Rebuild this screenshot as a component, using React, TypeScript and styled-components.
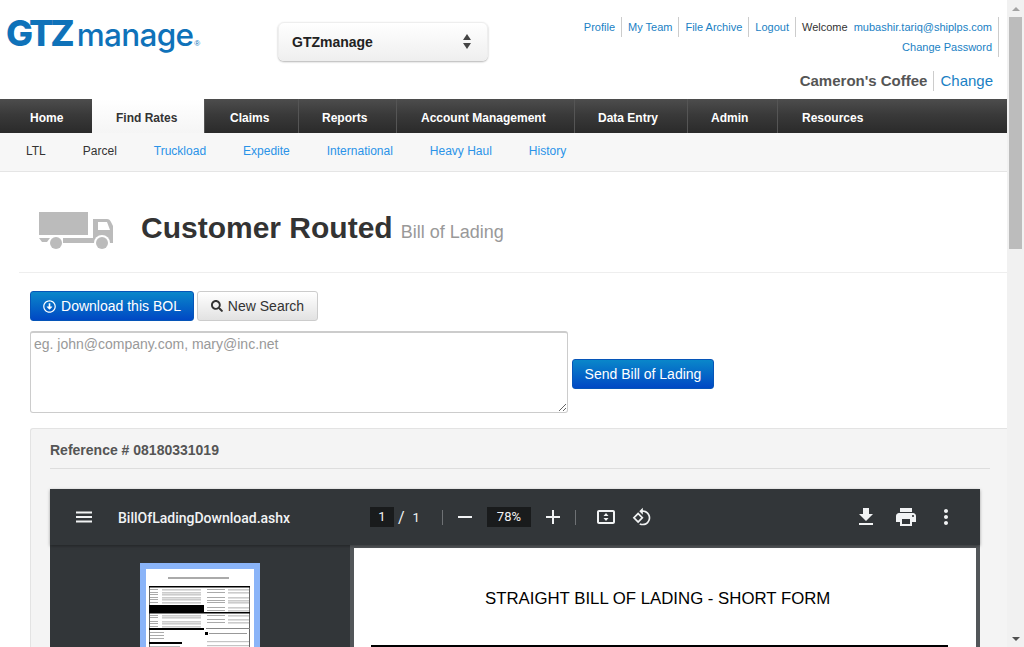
import * as React from "react"
import styled, { createGlobalStyle } from "styled-components"
import { FaRegArrowAltCircleDown, FaSearch } from "react-icons/fa"

const GlobalStyle = createGlobalStyle`
    html, body {
        margin: 0;
        height: 100%;
        overflow: hidden;
        background: #fff;
    }
    body, textarea, button {
        font-family: "Liberation Sans", Arial, sans-serif;
    }
    * {
        box-sizing: border-box;
    }
`

const navItems = [
    { label: "Home", width: 92, pad: 30, plain: true },
    { label: "Find Rates", width: 112, pad: 24, active: true, plain: true },
    { label: "Claims", width: 94, pad: 25 },
    { label: "Reports", width: 98, pad: 23 },
    { label: "Account Management", width: 178, pad: 24 },
    { label: "Data Entry", width: 113, pad: 23 },
    { label: "Admin", width: 90, pad: 23 },
    { label: "Resources", width: 110, pad: 24 },
]
const subItems = ["LTL", "Parcel", "Truckload", "Expedite", "International", "Heavy Haul", "History"]

const Logo = () => (
    <LogoBox>
        <LogoBold>GTZ</LogoBold>
        <LogoLight>manage</LogoLight>
        <LogoMark>®</LogoMark>
    </LogoBox>
)

const Truck = () => (
    <svg width="76" height="38" viewBox="0 0 76 38" fill="#bbb">
        <rect x="1" y="1" width="49" height="23" />
        <path d="M1 27h11l-3 4H4z" />
        <rect x="25" y="27" width="36" height="5" />
        <path
            d="M55 8h14c2 0 3 1 4 3l2 4 0 17h-4l-7-3-9 3z M60 11v8h12l-3-8z"
            fillRule="evenodd"
        />
        <circle cx="64" cy="32" r="8" fill="#fff" />
        <circle cx="18" cy="32" r="6" />
        <circle cx="64" cy="32" r="6" />
    </svg>
)

const Thumbnail = () => (
    <svg width="108" height="84" viewBox="0 0 108 84">
        <rect width="108" height="84" fill="#fff" />
        <rect x="22" y="8" width="61" height="2" fill="#aaa" />
        <rect x="3.5" y="17.5" width="100" height="66" fill="none" stroke="#666" strokeWidth="1" />
        <rect x="3" y="17" width="101" height="1.5" fill="#000" />
        <rect x="3" y="36" width="55" height="8" fill="#000" />
        <rect x="3" y="43" width="101" height="1.5" fill="#000" />
        <rect x="3" y="59" width="55" height="2" fill="#000" />
        <rect x="60" y="59" width="44" height="1" fill="#888" />
        <rect x="3" y="73" width="33" height="2" fill="#000" />
        {[20, 23, 25, 28, 30, 33, 46, 48, 52, 54, 57].map((y) => (
            <React.Fragment key={y}>
                <rect x="4" y={y} width="8" height="1" fill="#aaa" />
                <rect x="16" y={y} width="39" height="1.6" fill="#ccc" />
            </React.Fragment>
        ))}
        {[20, 23, 28, 31, 33, 38, 41, 46, 50, 53].map((y) => (
            <React.Fragment key={y}>
                <rect x="61" y={y} width="18" height="1" fill="#aaa" />
                <rect x="82" y={y} width="21" height="1.6" fill="#ccc" />
            </React.Fragment>
        ))}
        {[63, 66, 69].map((y) => (
            <rect key={y} x="4" y={y} width="14" height="1" fill="#aaa" />
        ))}
        {[77, 80].map((y) => (
            <rect key={y} x="4" y={y} width="30" height="1" fill="#bbb" />
        ))}
        <rect x="59" y="63" width="3" height="3" fill="#000" />
        <rect x="63" y="64" width="38" height="1" fill="#999" />
        {[72, 76, 80].map((y) => (
            <rect key={y} x="61" y={y} width="42" height="1.2" fill="#c4c4c4" />
        ))}
    </svg>
)

const Glyph = ({ d, size = 24 }: { d: string; size?: number }) => (
    <svg width={size} height={size} viewBox="0 0 24 24" fill="#f1f3f4">
        <path d={d} />
    </svg>
)

export default function App() {
    return (
        <Page>
            <GlobalStyle />
            <Main>
                <Header>
                    <Logo />
                    <SiteSelect>
                        <span>GTZmanage</span>
                        <Arrows>
                            <ArrowUp />
                            <ArrowDown />
                        </Arrows>
                    </SiteSelect>
                    <HeaderRight>
                        <TopLinks>
                            <TopRow>
                                <TopLink>Profile</TopLink>
                                <TopLink>My Team</TopLink>
                                <TopLink>File Archive</TopLink>
                                <TopLink>Logout</TopLink>
                                <TopCell>
                                    Welcome <Email>mubashir.tariq@shiplps.com</Email>
                                </TopCell>
                            </TopRow>
                            <TopRow>
                                <TopLink>Change Password</TopLink>
                            </TopRow>
                        </TopLinks>
                        <CompanyRow>
                            <Company>Cameron's Coffee</Company>
                            <ChangeLink>Change</ChangeLink>
                        </CompanyRow>
                    </HeaderRight>
                </Header>

                <Nav>
                    {navItems.map((item) => (
                        <NavItem
                            key={item.label}
                            $active={item.active}
                            $width={item.width}
                            $pad={item.pad}
                            $plain={item.plain}
                        >
                            {item.label}
                        </NavItem>
                    ))}
                </Nav>
                <SubNav>
                    {subItems.map((item, i) => (
                        <SubItem key={item} $plain={i < 2}>
                            {item}
                        </SubItem>
                    ))}
                </SubNav>

                <TitleRow>
                    <Truck />
                    <Title>Customer Routed</Title>
                    <TitleSmall>Bill of Lading</TitleSmall>
                </TitleRow>

                <Content>
                    <Buttons>
                        <PrimaryButton>
                            <FaRegArrowAltCircleDown size={13} />
                            Download this BOL
                        </PrimaryButton>
                        <DefaultButton>
                            <FaSearch size={12} />
                            New Search
                        </DefaultButton>
                    </Buttons>
                    <SendRow>
                        <EmailBox placeholder="eg. john@company.com, mary@inc.net" />
                        <SendButton>Send Bill of Lading</SendButton>
                    </SendRow>
                </Content>

                <Well>
                    <Reference>Reference # 08180331019</Reference>
                    <Viewer>
                        <ViewerBar>
                            <BarLeft>
                                <Glyph d="M4 17.5h16v-2H4v2zm0-4.5h16v-2H4v2zm0-6.5v2h16v-2H4z" />
                                <FileName>BillOfLadingDownload.ashx</FileName>
                            </BarLeft>
                            <BarCenter>
                                <PageBox>1</PageBox>
                                <Slash>/</Slash>
                                <PageTotal>1</PageTotal>
                                <BarDivider $left={22} />
                                <Glyph d="M5 11h14v2H5z" />
                                <ZoomBox>78%</ZoomBox>
                                <Glyph d="M19 13h-6v6h-2v-6H5v-2h6V5h2v6h6z" />
                                <BarDivider $left={10} />
                                <FitIcon>
                                    <Glyph d="M19 5H5c-1.1 0-2 .9-2 2v10c0 1.1.9 2 2 2h14c1.1 0 2-.9 2-2V7c0-1.1-.9-2-2-2zm0 12H5V7h14v10zM12 8l-2.5 3h5zM12 16l2.5-3h-5z" />
                                </FitIcon>
                                <Glyph
                                    size={20}
                                    d="M7.34 6.41.86 12.9l6.49 6.48 6.49-6.48-6.5-6.49zM3.69 12.9l3.66-3.66L11 12.9l-3.66 3.66-3.65-3.66zm15.67-6.26C17.61 4.88 15.3 4 13 4V.76L8.76 5 13 9.24V6c1.79 0 3.58.68 4.95 2.05 2.73 2.73 2.73 7.17 0 9.9C16.58 19.32 14.79 20 13 20c-.97 0-1.94-.21-2.84-.61l-1.49 1.49C10.02 21.62 11.51 22 13 22c2.3 0 4.61-.88 6.36-2.64 3.52-3.51 3.52-9.21 0-12.72z"
                                />
                            </BarCenter>
                            <BarRight>
                                <Glyph d="M19 9h-4V3H9v6H5l7 7 7-7zM5 18v2h14v-2H5z" />
                                <Glyph d="M19 8H5c-1.66 0-3 1.34-3 3v6h4v4h12v-4h4v-6c0-1.66-1.34-3-3-3zm-3 11H8v-5h8v5zm3-7c-.55 0-1-.45-1-1s.45-1 1-1 1 .45 1 1-.45 1-1 1zm-1-9H6v4h12V3z" />
                                <Glyph d="M12 8c1.1 0 2-.9 2-2s-.9-2-2-2-2 .9-2 2 .9 2 2 2zm0 2c-1.1 0-2 .9-2 2s.9 2 2 2 2-.9 2-2-.9-2-2-2zm0 6c-1.1 0-2 .9-2 2s.9 2 2 2 2-.9 2-2-.9-2-2-2z" />
                            </BarRight>
                        </ViewerBar>
                        <ViewerBody>
                            <SidePanel>
                                <ThumbFrame>
                                    <Thumbnail />
                                </ThumbFrame>
                            </SidePanel>
                            <DocArea>
                                <DocPage>
                                    <DocTitle>STRAIGHT BILL OF LADING - SHORT FORM</DocTitle>
                                    <DocRule />
                                </DocPage>
                            </DocArea>
                        </ViewerBody>
                    </Viewer>
                </Well>
            </Main>
            <ScrollTrack>
                <ScrollButton>
                    <ScrollUp />
                </ScrollButton>
                <ScrollThumb />
                <ScrollSpace />
                <ScrollButton>
                    <ScrollDown />
                </ScrollButton>
            </ScrollTrack>
        </Page>
    )
}

const Page = styled("div")`
    display: flex;
    width: 1024px;
    height: 647px;
    overflow: hidden;
`
const Main = styled("div")`
    width: 1007px;
    height: 647px;
    overflow: hidden;
    flex-shrink: 0;
`
const Header = styled("header")`
    height: 99px;
    display: flex;
    align-items: flex-start;
    padding-left: 6px;
`
const LogoBox = styled("div")`
    width: 272px;
    height: 60px;
    display: flex;
    align-items: baseline;
    color: #0f72b9;
    padding-top: 11px;
    flex-shrink: 0;
`
const LogoBold = styled("span")`
    font: 800 36px Inter, sans-serif;
    letter-spacing: -3px;
`
const LogoLight = styled("span")`
    font: 500 31.5px Inter, sans-serif;
    letter-spacing: -0.7px;
    margin-left: 5px;
`
const LogoMark = styled("span")`
    font: 400 8px "Liberation Sans", sans-serif;
    margin-left: 1px;
`
const SiteSelect = styled("div")`
    margin-top: 22px;
    width: 210px;
    height: 39px;
    border-radius: 6px;
    border: 1px solid #eee;
    background: linear-gradient(#fff, #efefef);
    box-shadow: 0 1px 2px rgba(0, 0, 0, 0.3);
    display: flex;
    align-items: center;
    justify-content: space-between;
    padding: 0 16px 0 13px;
    font-size: 14px;
    font-weight: 700;
    color: #222;
`
const Arrows = styled("div")`
    display: flex;
    flex-direction: column;
    gap: 3px;
`
const ArrowUp = styled("div")`
    border-left: 4.5px solid transparent;
    border-right: 4.5px solid transparent;
    border-bottom: 6px solid #444;
`
const ArrowDown = styled("div")`
    border-left: 4.5px solid transparent;
    border-right: 4.5px solid transparent;
    border-top: 6px solid #444;
`
const HeaderRight = styled("div")`
    margin-left: auto;
    display: flex;
    flex-direction: column;
    align-items: flex-end;
    padding: 17px 8px 0 0;
`
const TopLinks = styled("div")`
    display: flex;
    flex-direction: column;
    align-items: flex-end;
`
const TopRow = styled("div")`
    display: flex;
    height: 20px;
`
const TopCell = styled("div")`
    font-size: 11px;
    line-height: 20px;
    padding: 0 6px;
    border-right: 1px solid #ccc;
    color: #333;
    white-space: pre;
`
const TopLink = styled(TopCell)`
    color: #1a7fc4;
`
const Email = styled("span")`
    color: #1a7fc4;
    margin-left: 3px;
`
const CompanyRow = styled("div")`
    display: flex;
    align-items: center;
    height: 20px;
    margin-top: 14px;
    padding-right: 6px;
    font-size: 15px;
`
const Company = styled("div")`
    font-weight: 700;
    color: #555;
    padding-right: 6px;
    line-height: 20px;
    border-right: 1px solid #ccc;
`
const ChangeLink = styled("div")`
    color: #1a7fc4;
    padding: 0 0 2px 6px;
`
const Nav = styled("nav")`
    height: 34px;
    display: flex;
    background: linear-gradient(#4d4d4d, #3a3a3a 45%, #2a2a2a);
`
const NavItem = styled("div")<{ $active?: boolean; $width: number; $pad: number; $plain?: boolean }>`
    width: ${(p) => p.$width}px;
    padding: 3px 0 0 ${(p) => p.$pad}px;
    display: flex;
    align-items: center;
    white-space: nowrap;
    font-size: 12px;
    font-weight: 700;
    color: ${(p) => (p.$active ? "#333" : "#fff")};
    background: ${(p) => (p.$active ? "linear-gradient(#fff, #f5f5f5)" : "transparent")};
    border-left: ${(p) => (p.$plain ? "0" : "1px solid #555")};
`
const SubNav = styled("div")`
    height: 39px;
    display: flex;
    align-items: center;
    gap: 37px;
    padding: 0 0 3px 26px;
    background: #f7f7f7;
    border-bottom: 1px solid #e5e5e5;
`
const SubItem = styled("div")<{ $plain: boolean }>`
    font-size: 12px;
    color: ${(p) => (p.$plain ? "#333" : "#2a93e8")};
`
const TitleRow = styled("div")`
    margin-left: 19px;
    height: 101px;
    padding: 39px 0 0 19px;
    display: flex;
    align-items: flex-start;
    border-bottom: 1px solid #eee;
`
const Title = styled("h1")`
    margin: -1px 0 0 27px;
    font-size: 30px;
    line-height: 36px;
    font-weight: 700;
    color: #333;
`
const TitleSmall = styled("span")`
    margin: 9px 0 0 8px;
    font-size: 18px;
    line-height: 24px;
    color: #999;
`
const Content = styled("div")`
    padding: 18px 0 15px 30px;
`
const Buttons = styled("div")`
    display: flex;
    gap: 3px;
    height: 30px;
`
const PrimaryButton = styled("button")`
    width: 164px;
    height: 30px;
    padding: 0;
    display: flex;
    align-items: center;
    justify-content: center;
    gap: 5px;
    font-size: 14px;
    color: #fff;
    border: 1px solid #0655b8;
    border-radius: 3px;
    background: linear-gradient(#0a87ca, #0048c4);
`
const DefaultButton = styled("button")`
    width: 121px;
    height: 30px;
    padding: 0;
    display: flex;
    align-items: center;
    justify-content: center;
    gap: 5px;
    font-size: 14px;
    color: #333;
    border: 1px solid #ccc;
    border-radius: 3px;
    background: linear-gradient(#fff, #e2e2e2);
`
const SendRow = styled("div")`
    margin-top: 10px;
    display: flex;
    align-items: flex-start;
    gap: 4px;
`
const EmailBox = styled("textarea")`
    width: 538px;
    height: 82px;
    padding: 3px 3px;
    font-size: 14px;
    line-height: 16px;
    border: 1px solid #ccc;
    border-top-width: 2px;
    border-radius: 3px;
    outline: none;
    display: block;
    &::placeholder {
        color: #999;
    }
`
const SendButton = styled(PrimaryButton)`
    width: 142px;
    margin-top: 28px;
`
const Well = styled("section")`
    margin-left: 30px;
    height: 300px;
    padding: 0 17px 0 19px;
    background: #f4f4f4;
    border: 1px solid #e3e3e3;
    border-width: 1px 0 0 1px;
    border-top-left-radius: 3px;
    overflow: hidden;
`
const Reference = styled("div")`
    height: 40px;
    font-size: 14px;
    font-weight: 700;
    line-height: 42px;
    color: #555;
    border-bottom: 1px solid #ddd;
`
const Viewer = styled("div")`
    margin-top: 20px;
    width: 930px;
    height: 400px;
    background: #323639;
`
const ViewerBar = styled("div")`
    height: 56px;
    display: flex;
    align-items: center;
    color: #f1f3f4;
    position: relative;
    z-index: 1;
    box-shadow: 0 1px 3px rgba(0, 0, 0, 0.35);
    background: #323639;
`
const BarLeft = styled("div")`
    width: 320px;
    padding-left: 22px;
    display: flex;
    align-items: center;
    gap: 22px;
`
const FileName = styled("div")`
    margin-top: 2px;
    font: 500 14px Roboto, sans-serif;
`
const BarCenter = styled("div")`
    display: flex;
    align-items: center;
`
const PageBox = styled("div")`
    width: 24px;
    height: 20px;
    background: #191b1c;
    font: 400 13px/20px Roboto, sans-serif;
    text-align: center;
`
const Slash = styled("div")`
    margin-left: 4px;
    font: 400 16px Roboto, sans-serif;
`
const PageTotal = styled("div")`
    margin-left: 8px;
    font: 400 13px Roboto, sans-serif;
`
const BarDivider = styled("div")<{ $left: number }>`
    width: 1px;
    height: 15px;
    margin: 0 10px 0 ${(p) => p.$left}px;
    background: #6e7174;
`
const ZoomBox = styled("div")`
    width: 44px;
    height: 20px;
    margin: 0 10px;
    background: #191b1c;
    font: 400 13px/20px Roboto, sans-serif;
    text-align: center;
`
const FitIcon = styled("div")`
    display: flex;
    margin: 0 14px 0 8px;
`
const BarRight = styled("div")`
    margin-left: auto;
    padding-right: 22px;
    display: flex;
    gap: 16px;
`
const ViewerBody = styled("div")`
    display: flex;
    height: 344px;
`
const SidePanel = styled("div")`
    width: 300px;
    padding: 18px 0 0 90px;
    background: #323639;
`
const ThumbFrame = styled("div")`
    width: 120px;
    padding: 6px;
    background: #8ab4f8;
`
const DocArea = styled("div")`
    flex: 1;
    background: #525659;
    padding: 3px 4px 0;
`
const DocPage = styled("div")`
    height: 300px;
    background: #fff;
    padding: 41px 28px 0 17px;
`
const DocTitle = styled("div")`
    margin-left: 114px;
    font-size: 16.8px;
    line-height: 20px;
    color: #000;
    white-space: nowrap;
`
const DocRule = styled("div")`
    margin-top: 36px;
    height: 3px;
    background: #000;
`
const ScrollTrack = styled("div")`
    width: 17px;
    height: 647px;
    background: #f1f1f1;
    display: flex;
    flex-direction: column;
`
const ScrollButton = styled("div")`
    height: 17px;
    display: flex;
    align-items: center;
    justify-content: center;
`
const ScrollUp = styled("div")`
    border-left: 4px solid transparent;
    border-right: 4px solid transparent;
    border-bottom: 4px solid #a3a3a3;
`
const ScrollDown = styled("div")`
    border-left: 4px solid transparent;
    border-right: 4px solid transparent;
    border-top: 4px solid #505050;
`
const ScrollThumb = styled("div")`
    height: 232px;
    width: 13px;
    margin-left: 2px;
    background: #bcbcbc;
`
const ScrollSpace = styled("div")`
    flex: 1;
`
